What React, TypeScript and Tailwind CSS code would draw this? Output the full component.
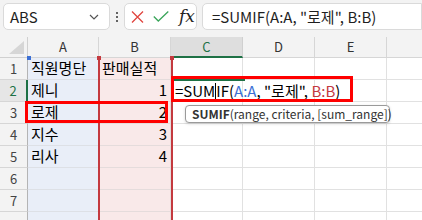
import React from "react";

const font = { fontFamily: '"Noto Sans CJK KR", "Noto Sans", sans-serif' };

// F column runs off the right edge, so its label is not visible
const cols = ["A", "B", "C", "D", "E", ""];

const data: string[][] = [
  ["직원명단", "판매실적"],
  ["제니", "1"],
  ["로제", "2"],
  ["지수", "3"],
  ["리사", "4"],
  ["", ""],
  ["", ""],
  ["", ""],
];

function Toolbar() {
  return (
    <div className="h-[37px] bg-[#f3f3f3] flex items-start pt-[3px] pl-[3px]">
      {/* name box */}
      <div className="w-[107px] h-[27px] bg-white border border-[#dadada] rounded-[5px] flex items-center justify-between pl-[6px] pr-[10px]">
        <span className="text-[15px] text-[#1f1f1f] leading-none">ABS</span>
        <svg width="10" height="6" viewBox="0 0 10 6" fill="none">
          <path d="M1 1l4 4 4-4" stroke="#555" strokeWidth="1.2" />
        </svg>
      </div>
      <div className="w-[14px] h-[27px] flex flex-col items-center justify-center gap-[2px]">
        <span className="w-[2px] h-[2px] bg-[#333] rounded-full" />
        <span className="w-[2px] h-[2px] bg-[#333] rounded-full" />
        <span className="w-[2px] h-[2px] bg-[#333] rounded-full" />
      </div>
      {/* cancel / enter / fx */}
      <div className="w-[73px] h-[27px] bg-white border border-[#dadada] rounded-[5px] flex items-center pl-[6px] gap-[9px]">
        <svg width="13" height="12" viewBox="0 0 13 12">
          <path d="M1 0.5l11 11M12 0.5l-11 11" stroke="#e0453f" strokeWidth="1.3" />
        </svg>
        <svg width="16" height="11" viewBox="0 0 16 11">
          <path d="M0.8 5.5l4.5 4.5 10-9.5" stroke="#3aa55a" strokeWidth="1.3" fill="none" />
        </svg>
        <span className="text-[17px] leading-none italic text-[#222] ml-[1px]" style={{ fontFamily: '"DejaVu Serif", "Liberation Serif", serif' }}>
          fx
        </span>
      </div>
      {/* formula bar */}
      <div className="ml-[5px] flex-1 h-[27px] bg-white border border-[#dadada] rounded-l-[5px] flex items-center pl-[9px]">
        <span className="text-[15px] text-[#1f1f1f] leading-none whitespace-pre">=SUMIF(A:A, "로제", B:B)</span>
      </div>
    </div>
  );
}

export default function App() {
  return (
    <div className="w-[422px] h-[220px] overflow-hidden relative bg-white" style={font}>
      <Toolbar />

      <div className="grid grid-cols-[28px_71px_72px_72px_72px_72px_72px] grid-rows-[21px_repeat(8,22px)]">
        {/* corner */}
        <div className="bg-[#f3f3f3] border-r border-b border-[#d0d0d0] flex items-end justify-end pr-[3px] pb-[3px]">
          <svg width="15" height="13" viewBox="0 0 15 13">
            <path d="M15 0V13H0Z" fill="#d6d6d6" />
          </svg>
        </div>
        {cols.map((c, k) => (
          <div
            key={k}
            className={
              c === "C"
                ? "bg-[#dedede] border-r border-[#d0d0d0] border-b-2 border-b-[#1e7145] flex items-center justify-center text-[13px] text-[#1e7145]"
                : "bg-[#f3f3f3] border-r border-b border-[#d6d6d6] flex items-center justify-center text-[13px] text-[#333]"
            }
          >
            {c}
          </div>
        ))}

        {data.map((row, i) => (
          <React.Fragment key={i}>
            <div
              className={
                i === 1
                  ? "bg-[#e6e6e6] border-b border-[#d6d6d6] border-r-2 border-r-[#1e7145] flex items-center justify-center text-[13px] text-[#1e7145]"
                  : "bg-[#f3f3f3] border-b border-[#d6d6d6] border-r border-r-[#b4b4b4] flex items-center justify-center text-[13px] text-[#444]"
              }
            >
              {i < 7 ? i + 1 : ""}
            </div>
            <div className="bg-[#e9eef8] border-r border-b border-[#dde0e6] flex items-center pl-[3px] text-[15px] text-black">
              {row[0]}
            </div>
            <div
              className={
                "bg-[#f9e9e9] border-r border-b border-[#e5dcdc] flex items-center pl-[3px] pr-[3px] text-[15px] text-black " +
                (i === 0 ? "justify-start" : "justify-end")
              }
            >
              {row[1]}
            </div>
            {[0, 1, 2, 3].map((j) => (
              <div key={j} className="border-r border-b border-[#e1e1e1]" />
            ))}
          </React.Fragment>
        ))}
      </div>

      {/* B:B reference outline */}
      <div className="absolute left-[98px] top-[58px] w-[75px] bottom-0 border-x-2 border-[#c4393f]" />
      <div className="absolute left-[97px] top-[56px] w-[4px] h-[4px] bg-[#c4393f]" />
      <div className="absolute left-[170px] top-[56px] w-[4px] h-[4px] bg-[#c4393f]" />
      <div className="absolute left-[27px] top-[56px] w-[4px] h-[4px] bg-[#3b6fd4]" />

      {/* active cell C2 in edit mode */}
      <div className="absolute left-[172px] top-[79px] w-[73px] h-[2px] bg-[#1e7145]" />
      <div className="absolute left-[172px] top-[80px] h-[22px] leading-[22px] pl-[3px] text-[15px] text-black whitespace-pre">
        =SUM<span className="inline-block w-[1px] h-[17px] bg-black align-[-3px]" />IF(<span className="text-[#3b6fd4]">A:A</span>, "로제", <span className="text-[#c4393f]">B:B</span>)
      </div>

      {/* function tooltip */}
      <div className="absolute left-[185px] top-[105px] w-[205px] h-[18px] bg-white border border-[#9a9a9a] rounded-[4px] shadow-[0_1px_3px_rgba(0,0,0,0.15)] flex items-center pl-[6px] text-[12px] text-[#333] whitespace-nowrap">
        <span className="font-bold">SUMIF</span>
        <span>(range, criteria, [sum_range])</span>
      </div>

      {/* red annotation boxes */}
      <div className="absolute left-[171px] top-[76px] w-[182px] h-[26px] border-[3px] border-[#ff0000]" />
      <div className="absolute left-[25px] top-[101px] w-[143px] h-[22px] border-[3px] border-[#ff0000]" />
    </div>
  );
}
